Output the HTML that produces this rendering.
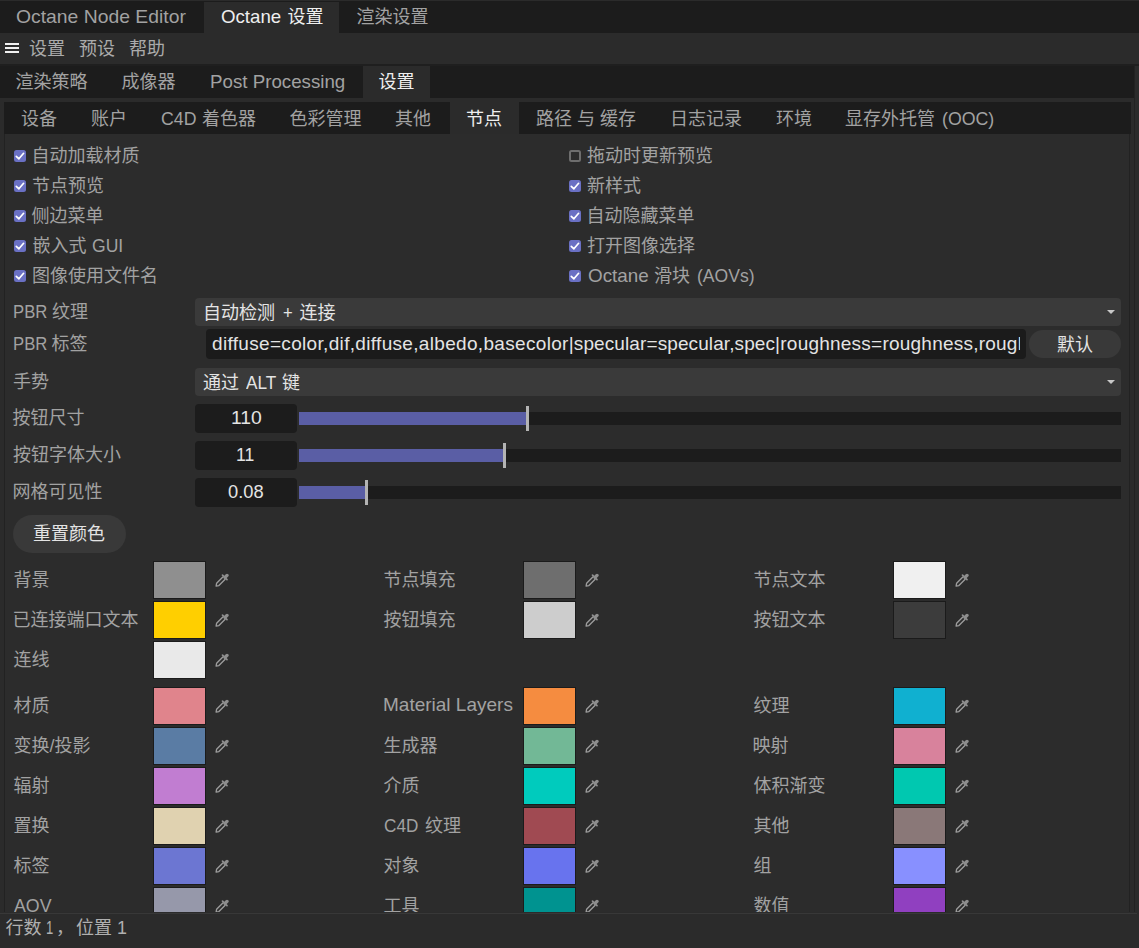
<!DOCTYPE html>
<html lang="zh-CN">
<head>
<meta charset="utf-8">
<title>Octane 设置</title>
<style>
*{box-sizing:border-box;margin:0;padding:0}
html,body{width:1139px;height:948px;overflow:hidden;background:#2b2b2b}
body{position:relative;font-family:"Liberation Sans","Noto Sans CJK SC",sans-serif;font-size:18px;color:#a2a2a2;line-height:24px}
.abs{position:absolute}
.t{position:absolute;white-space:nowrap;height:24px;line-height:24px;transform-origin:0 50%}
.lat{font-size:19px}
.on{color:#efefef}
.mn{color:#ababab}
.val{color:#e4e4e4}
.st{color:#b0b0b0;z-index:6}
#bar1{left:0;top:0;width:1139px;height:33px;background:#1c1c1c}
#bar1top{left:0;top:0;width:1139px;height:1px;background:#2b2b2b}
#tab1act{left:204px;top:2px;width:135px;height:31px;background:#2b2b2b}
#bar2{left:0;top:66px;width:1135px;height:32px;background:#1c1c1c}
#tab2act{left:363px;top:66px;width:67px;height:32px;background:#2b2b2b}
#bar3{left:4px;top:102px;width:1127px;height:32px;background:#1c1c1c}
#tab3act{left:450px;top:102px;width:69px;height:32px;background:#2b2b2b}
#panel{left:4px;top:134px;width:1126px;height:778px;background:#2c2c2c;border-left:1px solid #222;border-right:1px solid #222}
.ham{left:5px;width:14px;height:2px;background:#f0f0f0}
.cb{position:absolute;width:12px;height:12px;border-radius:2.5px;background:#6a70c4}
.cb svg{position:absolute;left:0;top:0}
.cb.off{background:transparent;border:2px solid #6e6e6e}
.dd{position:absolute;left:195px;width:926px;height:28px;background:#3a3a3a;border-radius:4px}
.dd:after{content:"";position:absolute;right:6px;top:12px;border-left:4px solid transparent;border-right:4px solid transparent;border-top:4.5px solid #c8c8c8}
.num{position:absolute;left:195px;width:102px;height:29px;background:#1c1c1c;border-radius:4px}
.trk{position:absolute;left:299px;width:822px;height:13px;background:#1c1c1c}
.fill{position:absolute;left:299px;height:13px;background:#5a5ea5}
.knob{position:absolute;width:3px;height:25px;background:#b4b4b4}
.pill{position:absolute;background:#393939;border-radius:20px}
.sw{position:absolute;width:53px;height:38px;border:1px solid #1b1b1b}
.ey{position:absolute;width:14px;height:14px}
#clip{left:0;top:134px;width:1139px;height:778px;overflow:hidden}
#status{z-index:5;left:0;top:912px;width:1139px;height:36px;background:#2b2b2b}
#stline{z-index:6;left:0;top:913px;width:1137px;height:1px;background:#383838}
.vl{position:absolute;width:1px;background:#222}
#hl{left:0;top:64px;width:1139px;height:2px;background:#1f1f1f}
#inp{left:206px;top:329px;width:820px;height:30px;background:#1b1b1b;border-radius:4px;overflow:hidden}
</style>
</head>
<body>
<div class="abs" id="bar1"></div>
<div class="abs" id="bar1top"></div>
<div class="abs" id="tab1act"></div>
<div class="abs ham" style="top:43px"></div>
<div class="abs ham" style="top:47px"></div>
<div class="abs ham" style="top:51px"></div>
<div class="abs" id="hl"></div>
<div class="abs" id="bar2"></div>
<div class="vl" style="left:1134px;top:66px;height:846px"></div>
<div class="abs" id="tab2act"></div>
<div class="abs" id="bar3"></div>
<div class="abs" id="tab3act"></div>
<div class="abs" id="panel"></div>
<div class="cb" style="left:14px;top:150px"><svg width="12" height="12" viewBox="0 0 12 12"><path d="M2.3 6.3 L4.9 8.8 L9.6 3.3" fill="none" stroke="#fff" stroke-width="1.7" stroke-linecap="round" stroke-linejoin="round"/></svg></div>
<div class="cb off" style="left:569px;top:150px"></div>
<div class="cb" style="left:14px;top:180px"><svg width="12" height="12" viewBox="0 0 12 12"><path d="M2.3 6.3 L4.9 8.8 L9.6 3.3" fill="none" stroke="#fff" stroke-width="1.7" stroke-linecap="round" stroke-linejoin="round"/></svg></div>
<div class="cb" style="left:569px;top:180px"><svg width="12" height="12" viewBox="0 0 12 12"><path d="M2.3 6.3 L4.9 8.8 L9.6 3.3" fill="none" stroke="#fff" stroke-width="1.7" stroke-linecap="round" stroke-linejoin="round"/></svg></div>
<div class="cb" style="left:14px;top:210px"><svg width="12" height="12" viewBox="0 0 12 12"><path d="M2.3 6.3 L4.9 8.8 L9.6 3.3" fill="none" stroke="#fff" stroke-width="1.7" stroke-linecap="round" stroke-linejoin="round"/></svg></div>
<div class="cb" style="left:569px;top:210px"><svg width="12" height="12" viewBox="0 0 12 12"><path d="M2.3 6.3 L4.9 8.8 L9.6 3.3" fill="none" stroke="#fff" stroke-width="1.7" stroke-linecap="round" stroke-linejoin="round"/></svg></div>
<div class="cb" style="left:14px;top:240px"><svg width="12" height="12" viewBox="0 0 12 12"><path d="M2.3 6.3 L4.9 8.8 L9.6 3.3" fill="none" stroke="#fff" stroke-width="1.7" stroke-linecap="round" stroke-linejoin="round"/></svg></div>
<div class="cb" style="left:569px;top:240px"><svg width="12" height="12" viewBox="0 0 12 12"><path d="M2.3 6.3 L4.9 8.8 L9.6 3.3" fill="none" stroke="#fff" stroke-width="1.7" stroke-linecap="round" stroke-linejoin="round"/></svg></div>
<div class="cb" style="left:14px;top:270px"><svg width="12" height="12" viewBox="0 0 12 12"><path d="M2.3 6.3 L4.9 8.8 L9.6 3.3" fill="none" stroke="#fff" stroke-width="1.7" stroke-linecap="round" stroke-linejoin="round"/></svg></div>
<div class="cb" style="left:569px;top:270px"><svg width="12" height="12" viewBox="0 0 12 12"><path d="M2.3 6.3 L4.9 8.8 L9.6 3.3" fill="none" stroke="#fff" stroke-width="1.7" stroke-linecap="round" stroke-linejoin="round"/></svg></div>
<div class="dd" style="top:298px"></div>
<div class="abs" id="inp"><div class="abs" style="left:6px;top:0;width:808px;height:30px;overflow:hidden"><div class="t val lat" id="tags" style="left:0;top:3px"><span style="letter-spacing:.325px">diffuse=color,dif,diffuse,albedo,basecolor</span><span style="letter-spacing:.10px">|specular=specular,spec</span><span style="letter-spacing:.23px">|roughness=roughness,rough</span></div></div></div>
<div class="pill" style="left:1029px;top:330px;width:92px;height:28px"></div>
<div class="dd" style="top:368px"></div>
<div class="num" style="top:404px"></div><div class="trk" style="top:412px"></div><div class="fill" style="top:412px;width:228px"></div><div class="knob" style="left:526px;top:406px"></div>
<div class="num" style="top:441px"></div><div class="trk" style="top:449px"></div><div class="fill" style="top:449px;width:205px"></div><div class="knob" style="left:503px;top:443px"></div>
<div class="num" style="top:478px"></div><div class="trk" style="top:486px"></div><div class="fill" style="top:486px;width:67px"></div><div class="knob" style="left:365px;top:480px"></div>
<div class="pill" style="left:13px;top:515px;width:113px;height:38px"></div>
<div class="sw" style="left:153px;top:561px;background:#8f8f8f"></div><svg class="ey" style="left:215px;top:572.5px" width="14" height="14" viewBox="0 0 14 14"><path d="M8.1 3.8 L1.6 10.3 L1.1 13.1 L3.9 12.6 L10.4 6.1" fill="none" stroke="#9c9c9c" stroke-width="1.35" stroke-linejoin="round"/><path d="M7.5 2.2 L12 6.7" stroke="#8e8e8e" stroke-width="1.7" stroke-linecap="round"/><path d="M10 4.4 L12 2.4" stroke="#8e8e8e" stroke-width="3.3" stroke-linecap="round"/></svg>
<div class="sw" style="left:153px;top:601px;background:#ffcf00"></div><svg class="ey" style="left:215px;top:612.5px" width="14" height="14" viewBox="0 0 14 14"><path d="M8.1 3.8 L1.6 10.3 L1.1 13.1 L3.9 12.6 L10.4 6.1" fill="none" stroke="#9c9c9c" stroke-width="1.35" stroke-linejoin="round"/><path d="M7.5 2.2 L12 6.7" stroke="#8e8e8e" stroke-width="1.7" stroke-linecap="round"/><path d="M10 4.4 L12 2.4" stroke="#8e8e8e" stroke-width="3.3" stroke-linecap="round"/></svg>
<div class="sw" style="left:153px;top:641px;background:#e9e9e9"></div><svg class="ey" style="left:215px;top:652.5px" width="14" height="14" viewBox="0 0 14 14"><path d="M8.1 3.8 L1.6 10.3 L1.1 13.1 L3.9 12.6 L10.4 6.1" fill="none" stroke="#9c9c9c" stroke-width="1.35" stroke-linejoin="round"/><path d="M7.5 2.2 L12 6.7" stroke="#8e8e8e" stroke-width="1.7" stroke-linecap="round"/><path d="M10 4.4 L12 2.4" stroke="#8e8e8e" stroke-width="3.3" stroke-linecap="round"/></svg>
<div class="sw" style="left:153px;top:687px;background:#e0848c"></div><svg class="ey" style="left:215px;top:698.5px" width="14" height="14" viewBox="0 0 14 14"><path d="M8.1 3.8 L1.6 10.3 L1.1 13.1 L3.9 12.6 L10.4 6.1" fill="none" stroke="#9c9c9c" stroke-width="1.35" stroke-linejoin="round"/><path d="M7.5 2.2 L12 6.7" stroke="#8e8e8e" stroke-width="1.7" stroke-linecap="round"/><path d="M10 4.4 L12 2.4" stroke="#8e8e8e" stroke-width="3.3" stroke-linecap="round"/></svg>
<div class="sw" style="left:153px;top:727px;background:#5a7ca4"></div><svg class="ey" style="left:215px;top:738.5px" width="14" height="14" viewBox="0 0 14 14"><path d="M8.1 3.8 L1.6 10.3 L1.1 13.1 L3.9 12.6 L10.4 6.1" fill="none" stroke="#9c9c9c" stroke-width="1.35" stroke-linejoin="round"/><path d="M7.5 2.2 L12 6.7" stroke="#8e8e8e" stroke-width="1.7" stroke-linecap="round"/><path d="M10 4.4 L12 2.4" stroke="#8e8e8e" stroke-width="3.3" stroke-linecap="round"/></svg>
<div class="sw" style="left:153px;top:767px;background:#c17dd1"></div><svg class="ey" style="left:215px;top:778.5px" width="14" height="14" viewBox="0 0 14 14"><path d="M8.1 3.8 L1.6 10.3 L1.1 13.1 L3.9 12.6 L10.4 6.1" fill="none" stroke="#9c9c9c" stroke-width="1.35" stroke-linejoin="round"/><path d="M7.5 2.2 L12 6.7" stroke="#8e8e8e" stroke-width="1.7" stroke-linecap="round"/><path d="M10 4.4 L12 2.4" stroke="#8e8e8e" stroke-width="3.3" stroke-linecap="round"/></svg>
<div class="sw" style="left:153px;top:807px;background:#e0d2b0"></div><svg class="ey" style="left:215px;top:818.5px" width="14" height="14" viewBox="0 0 14 14"><path d="M8.1 3.8 L1.6 10.3 L1.1 13.1 L3.9 12.6 L10.4 6.1" fill="none" stroke="#9c9c9c" stroke-width="1.35" stroke-linejoin="round"/><path d="M7.5 2.2 L12 6.7" stroke="#8e8e8e" stroke-width="1.7" stroke-linecap="round"/><path d="M10 4.4 L12 2.4" stroke="#8e8e8e" stroke-width="3.3" stroke-linecap="round"/></svg>
<div class="sw" style="left:153px;top:847px;background:#6c76d2"></div><svg class="ey" style="left:215px;top:858.5px" width="14" height="14" viewBox="0 0 14 14"><path d="M8.1 3.8 L1.6 10.3 L1.1 13.1 L3.9 12.6 L10.4 6.1" fill="none" stroke="#9c9c9c" stroke-width="1.35" stroke-linejoin="round"/><path d="M7.5 2.2 L12 6.7" stroke="#8e8e8e" stroke-width="1.7" stroke-linecap="round"/><path d="M10 4.4 L12 2.4" stroke="#8e8e8e" stroke-width="3.3" stroke-linecap="round"/></svg>
<div class="sw" style="left:153px;top:887px;background:#9698aa"></div><svg class="ey" style="left:215px;top:898.5px" width="14" height="14" viewBox="0 0 14 14"><path d="M8.1 3.8 L1.6 10.3 L1.1 13.1 L3.9 12.6 L10.4 6.1" fill="none" stroke="#9c9c9c" stroke-width="1.35" stroke-linejoin="round"/><path d="M7.5 2.2 L12 6.7" stroke="#8e8e8e" stroke-width="1.7" stroke-linecap="round"/><path d="M10 4.4 L12 2.4" stroke="#8e8e8e" stroke-width="3.3" stroke-linecap="round"/></svg>
<div class="sw" style="left:523px;top:561px;background:#6e6e6e"></div><svg class="ey" style="left:585px;top:572.5px" width="14" height="14" viewBox="0 0 14 14"><path d="M8.1 3.8 L1.6 10.3 L1.1 13.1 L3.9 12.6 L10.4 6.1" fill="none" stroke="#9c9c9c" stroke-width="1.35" stroke-linejoin="round"/><path d="M7.5 2.2 L12 6.7" stroke="#8e8e8e" stroke-width="1.7" stroke-linecap="round"/><path d="M10 4.4 L12 2.4" stroke="#8e8e8e" stroke-width="3.3" stroke-linecap="round"/></svg>
<div class="sw" style="left:523px;top:601px;background:#cdcdcd"></div><svg class="ey" style="left:585px;top:612.5px" width="14" height="14" viewBox="0 0 14 14"><path d="M8.1 3.8 L1.6 10.3 L1.1 13.1 L3.9 12.6 L10.4 6.1" fill="none" stroke="#9c9c9c" stroke-width="1.35" stroke-linejoin="round"/><path d="M7.5 2.2 L12 6.7" stroke="#8e8e8e" stroke-width="1.7" stroke-linecap="round"/><path d="M10 4.4 L12 2.4" stroke="#8e8e8e" stroke-width="3.3" stroke-linecap="round"/></svg>
<div class="sw" style="left:523px;top:687px;background:#f58c40"></div><svg class="ey" style="left:585px;top:698.5px" width="14" height="14" viewBox="0 0 14 14"><path d="M8.1 3.8 L1.6 10.3 L1.1 13.1 L3.9 12.6 L10.4 6.1" fill="none" stroke="#9c9c9c" stroke-width="1.35" stroke-linejoin="round"/><path d="M7.5 2.2 L12 6.7" stroke="#8e8e8e" stroke-width="1.7" stroke-linecap="round"/><path d="M10 4.4 L12 2.4" stroke="#8e8e8e" stroke-width="3.3" stroke-linecap="round"/></svg>
<div class="sw" style="left:523px;top:727px;background:#72b896"></div><svg class="ey" style="left:585px;top:738.5px" width="14" height="14" viewBox="0 0 14 14"><path d="M8.1 3.8 L1.6 10.3 L1.1 13.1 L3.9 12.6 L10.4 6.1" fill="none" stroke="#9c9c9c" stroke-width="1.35" stroke-linejoin="round"/><path d="M7.5 2.2 L12 6.7" stroke="#8e8e8e" stroke-width="1.7" stroke-linecap="round"/><path d="M10 4.4 L12 2.4" stroke="#8e8e8e" stroke-width="3.3" stroke-linecap="round"/></svg>
<div class="sw" style="left:523px;top:767px;background:#00cbbd"></div><svg class="ey" style="left:585px;top:778.5px" width="14" height="14" viewBox="0 0 14 14"><path d="M8.1 3.8 L1.6 10.3 L1.1 13.1 L3.9 12.6 L10.4 6.1" fill="none" stroke="#9c9c9c" stroke-width="1.35" stroke-linejoin="round"/><path d="M7.5 2.2 L12 6.7" stroke="#8e8e8e" stroke-width="1.7" stroke-linecap="round"/><path d="M10 4.4 L12 2.4" stroke="#8e8e8e" stroke-width="3.3" stroke-linecap="round"/></svg>
<div class="sw" style="left:523px;top:807px;background:#a04a52"></div><svg class="ey" style="left:585px;top:818.5px" width="14" height="14" viewBox="0 0 14 14"><path d="M8.1 3.8 L1.6 10.3 L1.1 13.1 L3.9 12.6 L10.4 6.1" fill="none" stroke="#9c9c9c" stroke-width="1.35" stroke-linejoin="round"/><path d="M7.5 2.2 L12 6.7" stroke="#8e8e8e" stroke-width="1.7" stroke-linecap="round"/><path d="M10 4.4 L12 2.4" stroke="#8e8e8e" stroke-width="3.3" stroke-linecap="round"/></svg>
<div class="sw" style="left:523px;top:847px;background:#6873ee"></div><svg class="ey" style="left:585px;top:858.5px" width="14" height="14" viewBox="0 0 14 14"><path d="M8.1 3.8 L1.6 10.3 L1.1 13.1 L3.9 12.6 L10.4 6.1" fill="none" stroke="#9c9c9c" stroke-width="1.35" stroke-linejoin="round"/><path d="M7.5 2.2 L12 6.7" stroke="#8e8e8e" stroke-width="1.7" stroke-linecap="round"/><path d="M10 4.4 L12 2.4" stroke="#8e8e8e" stroke-width="3.3" stroke-linecap="round"/></svg>
<div class="sw" style="left:523px;top:887px;background:#009390"></div><svg class="ey" style="left:585px;top:898.5px" width="14" height="14" viewBox="0 0 14 14"><path d="M8.1 3.8 L1.6 10.3 L1.1 13.1 L3.9 12.6 L10.4 6.1" fill="none" stroke="#9c9c9c" stroke-width="1.35" stroke-linejoin="round"/><path d="M7.5 2.2 L12 6.7" stroke="#8e8e8e" stroke-width="1.7" stroke-linecap="round"/><path d="M10 4.4 L12 2.4" stroke="#8e8e8e" stroke-width="3.3" stroke-linecap="round"/></svg>
<div class="sw" style="left:893px;top:561px;background:#f0f0f0"></div><svg class="ey" style="left:955px;top:572.5px" width="14" height="14" viewBox="0 0 14 14"><path d="M8.1 3.8 L1.6 10.3 L1.1 13.1 L3.9 12.6 L10.4 6.1" fill="none" stroke="#9c9c9c" stroke-width="1.35" stroke-linejoin="round"/><path d="M7.5 2.2 L12 6.7" stroke="#8e8e8e" stroke-width="1.7" stroke-linecap="round"/><path d="M10 4.4 L12 2.4" stroke="#8e8e8e" stroke-width="3.3" stroke-linecap="round"/></svg>
<div class="sw" style="left:893px;top:601px;background:#3c3c3c"></div><svg class="ey" style="left:955px;top:612.5px" width="14" height="14" viewBox="0 0 14 14"><path d="M8.1 3.8 L1.6 10.3 L1.1 13.1 L3.9 12.6 L10.4 6.1" fill="none" stroke="#9c9c9c" stroke-width="1.35" stroke-linejoin="round"/><path d="M7.5 2.2 L12 6.7" stroke="#8e8e8e" stroke-width="1.7" stroke-linecap="round"/><path d="M10 4.4 L12 2.4" stroke="#8e8e8e" stroke-width="3.3" stroke-linecap="round"/></svg>
<div class="sw" style="left:893px;top:687px;background:#10b0d0"></div><svg class="ey" style="left:955px;top:698.5px" width="14" height="14" viewBox="0 0 14 14"><path d="M8.1 3.8 L1.6 10.3 L1.1 13.1 L3.9 12.6 L10.4 6.1" fill="none" stroke="#9c9c9c" stroke-width="1.35" stroke-linejoin="round"/><path d="M7.5 2.2 L12 6.7" stroke="#8e8e8e" stroke-width="1.7" stroke-linecap="round"/><path d="M10 4.4 L12 2.4" stroke="#8e8e8e" stroke-width="3.3" stroke-linecap="round"/></svg>
<div class="sw" style="left:893px;top:727px;background:#d8829c"></div><svg class="ey" style="left:955px;top:738.5px" width="14" height="14" viewBox="0 0 14 14"><path d="M8.1 3.8 L1.6 10.3 L1.1 13.1 L3.9 12.6 L10.4 6.1" fill="none" stroke="#9c9c9c" stroke-width="1.35" stroke-linejoin="round"/><path d="M7.5 2.2 L12 6.7" stroke="#8e8e8e" stroke-width="1.7" stroke-linecap="round"/><path d="M10 4.4 L12 2.4" stroke="#8e8e8e" stroke-width="3.3" stroke-linecap="round"/></svg>
<div class="sw" style="left:893px;top:767px;background:#00c8b0"></div><svg class="ey" style="left:955px;top:778.5px" width="14" height="14" viewBox="0 0 14 14"><path d="M8.1 3.8 L1.6 10.3 L1.1 13.1 L3.9 12.6 L10.4 6.1" fill="none" stroke="#9c9c9c" stroke-width="1.35" stroke-linejoin="round"/><path d="M7.5 2.2 L12 6.7" stroke="#8e8e8e" stroke-width="1.7" stroke-linecap="round"/><path d="M10 4.4 L12 2.4" stroke="#8e8e8e" stroke-width="3.3" stroke-linecap="round"/></svg>
<div class="sw" style="left:893px;top:807px;background:#8a7878"></div><svg class="ey" style="left:955px;top:818.5px" width="14" height="14" viewBox="0 0 14 14"><path d="M8.1 3.8 L1.6 10.3 L1.1 13.1 L3.9 12.6 L10.4 6.1" fill="none" stroke="#9c9c9c" stroke-width="1.35" stroke-linejoin="round"/><path d="M7.5 2.2 L12 6.7" stroke="#8e8e8e" stroke-width="1.7" stroke-linecap="round"/><path d="M10 4.4 L12 2.4" stroke="#8e8e8e" stroke-width="3.3" stroke-linecap="round"/></svg>
<div class="sw" style="left:893px;top:847px;background:#8890ff"></div><svg class="ey" style="left:955px;top:858.5px" width="14" height="14" viewBox="0 0 14 14"><path d="M8.1 3.8 L1.6 10.3 L1.1 13.1 L3.9 12.6 L10.4 6.1" fill="none" stroke="#9c9c9c" stroke-width="1.35" stroke-linejoin="round"/><path d="M7.5 2.2 L12 6.7" stroke="#8e8e8e" stroke-width="1.7" stroke-linecap="round"/><path d="M10 4.4 L12 2.4" stroke="#8e8e8e" stroke-width="3.3" stroke-linecap="round"/></svg>
<div class="sw" style="left:893px;top:887px;background:#9040c0"></div><svg class="ey" style="left:955px;top:898.5px" width="14" height="14" viewBox="0 0 14 14"><path d="M8.1 3.8 L1.6 10.3 L1.1 13.1 L3.9 12.6 L10.4 6.1" fill="none" stroke="#9c9c9c" stroke-width="1.35" stroke-linejoin="round"/><path d="M7.5 2.2 L12 6.7" stroke="#8e8e8e" stroke-width="1.7" stroke-linecap="round"/><path d="M10 4.4 L12 2.4" stroke="#8e8e8e" stroke-width="3.3" stroke-linecap="round"/></svg>
<div class="abs" id="status"></div>
<div class="abs" id="stline"></div>
<div class="t lat" id="p0" style="left:15.60px;top:5px;transform:scaleX(1.0180)">Octane Node Editor</div>
<div class="t lat on" id="p1" style="left:220.50px;top:5px;transform:scaleX(0.9820)">Octane</div>
<div class="t on" id="p2" style="left:287.50px;top:5px">设置</div>
<div class="t" id="p3" style="left:356.50px;top:5px">渲染设置</div>
<div class="t mn" id="p4" style="left:29.00px;top:37px">设置</div>
<div class="t mn" id="p5" style="left:79.00px;top:37px">预设</div>
<div class="t mn" id="p6" style="left:129.00px;top:37px">帮助</div>
<div class="t" id="p7" style="left:15.50px;top:70px">渲染策略</div>
<div class="t" id="p8" style="left:121.50px;top:70px">成像器</div>
<div class="t lat" id="p9" style="left:209.51px;top:70px;transform:scaleX(0.9853)">Post Processing</div>
<div class="t on" id="p10" style="left:378.50px;top:70px">设置</div>
<div class="t" id="p11" style="left:21.00px;top:107px">设备</div>
<div class="t" id="p12" style="left:91.00px;top:107px">账户</div>
<div class="t lat" id="p13" style="left:161.00px;top:107px;transform:scaleX(0.9316)">C4D</div>
<div class="t" id="p14" style="left:202.00px;top:107px">着色器</div>
<div class="t" id="p15" style="left:289.50px;top:107px">色彩管理</div>
<div class="t" id="p16" style="left:395.00px;top:107px">其他</div>
<div class="t on" id="p17" style="left:466.00px;top:107px">节点</div>
<div class="t" id="p18" style="left:536.00px;top:107px">路径 与 缓存</div>
<div class="t" id="p19" style="left:670.00px;top:107px">日志记录</div>
<div class="t" id="p20" style="left:776.00px;top:107px">环境</div>
<div class="t" id="p21" style="left:845.00px;top:107px">显存外托管</div>
<div class="t lat" id="p22" style="left:942.00px;top:107px;transform:scaleX(0.9345)">(OOC)</div>
<div class="t" id="p23" style="left:31.50px;top:144px">自动加载材质</div>
<div class="t" id="p24" style="left:32.00px;top:174px">节点预览</div>
<div class="t" id="p25" style="left:31.50px;top:204px">侧边菜单</div>
<div class="t" id="p26" style="left:32.50px;top:234px">嵌入式</div>
<div class="t lat" id="p27" style="left:92.00px;top:234px;transform:scaleX(0.9242)">GUI</div>
<div class="t" id="p28" style="left:32.00px;top:264px">图像使用文件名</div>
<div class="t" id="p29" style="left:587.00px;top:144px">拖动时更新预览</div>
<div class="t" id="p30" style="left:587.00px;top:174px">新样式</div>
<div class="t" id="p31" style="left:586.50px;top:204px">自动隐藏菜单</div>
<div class="t" id="p32" style="left:587.00px;top:234px">打开图像选择</div>
<div class="t lat" id="p33" style="left:587.50px;top:264px;transform:scaleX(0.9918)">Octane</div>
<div class="t" id="p34" style="left:654.00px;top:264px">滑块</div>
<div class="t lat" id="p35" style="left:697.00px;top:264px;transform:scaleX(0.9234)">(AOVs)</div>
<div class="t lat" id="p36" style="left:13.42px;top:300px;transform:scaleX(0.8789)">PBR</div>
<div class="t" id="p37" style="left:52.00px;top:300px">纹理</div>
<div class="t lat" id="p38" style="left:13.42px;top:332px;transform:scaleX(0.8789)">PBR</div>
<div class="t" id="p39" style="left:51.50px;top:332px">标签</div>
<div class="t val" id="p40" style="left:203.00px;top:301px">自动检测</div>
<div class="t lat val" id="p41" style="left:282.60px;top:301px;transform:scaleX(0.8727)">+</div>
<div class="t val" id="p42" style="left:299.50px;top:301px">连接</div>
<div class="t val" id="p43" style="left:1057.00px;top:333px">默认</div>
<div class="t" id="p44" style="left:13.00px;top:370px">手势</div>
<div class="t val" id="p45" style="left:203.00px;top:371px">通过</div>
<div class="t lat val" id="p46" style="left:245.70px;top:371px;transform:scaleX(0.9029)">ALT</div>
<div class="t val" id="p47" style="left:282.00px;top:371px">键</div>
<div class="t" id="p48" style="left:12.50px;top:406px">按钮尺寸</div>
<div class="t" id="p49" style="left:13.00px;top:443px">按钮字体大小</div>
<div class="t" id="p50" style="left:12.50px;top:480px">网格可见性</div>
<div class="t lat val" id="p51" style="left:230.78px;top:406px;transform:scaleX(1.0172)">110</div>
<div class="t lat val" id="p52" style="left:235.57px;top:443px;transform:scaleX(0.9263)">11</div>
<div class="t lat val" id="p53" style="left:227.80px;top:480px;transform:scaleX(0.9622)">0.08</div>
<div class="t val" id="p54" style="left:33.00px;top:522px">重置颜色</div>
<div class="t st" id="p55" style="left:5.50px;top:916px">行数</div>
<div class="t lat st" id="p56" style="left:45.81px;top:916px;transform:scaleX(0.6889)">1</div>
<div class="t st" id="p57" style="left:56.00px;top:916px">，</div>
<div class="t st" id="p58" style="left:76.00px;top:916px">位置</div>
<div class="t lat st" id="p59" style="left:116.56px;top:916px;transform:scaleX(0.9444)">1</div>
<div class="t" id="p60" style="left:13.50px;top:568px">背景</div>
<div class="t" id="p61" style="left:12.50px;top:608px">已连接端口文本</div>
<div class="t" id="p62" style="left:13.50px;top:648px">连线</div>
<div class="t" id="p63" style="left:13.50px;top:694px">材质</div>
<div class="t" id="p64" style="left:13.50px;top:734px">变换/投影</div>
<div class="t" id="p65" style="left:13.50px;top:774px">辐射</div>
<div class="t" id="p66" style="left:13.50px;top:814px">置换</div>
<div class="t" id="p67" style="left:13.50px;top:854px">标签</div>
<div class="t lat" id="p68" style="left:13.94px;top:894px;transform:scaleX(0.9357)">AOV</div>
<div class="t" id="p69" style="left:383.50px;top:568px">节点填充</div>
<div class="t" id="p70" style="left:383.50px;top:608px">按钮填充</div>
<div class="t lat" id="p71" style="left:383.00px;top:693px">Material Layers</div>
<div class="t" id="p72" style="left:383.50px;top:734px">生成器</div>
<div class="t" id="p73" style="left:383.50px;top:774px">介质</div>
<div class="t lat" id="p74" style="left:383.70px;top:814px;transform:scaleX(0.9026)">C4D</div>
<div class="t" id="p75" style="left:425.00px;top:814px">纹理</div>
<div class="t" id="p76" style="left:383.50px;top:854px">对象</div>
<div class="t" id="p77" style="left:383.50px;top:894px">工具</div>
<div class="t" id="p78" style="left:753.50px;top:568px">节点文本</div>
<div class="t" id="p79" style="left:753.50px;top:608px">按钮文本</div>
<div class="t" id="p80" style="left:753.50px;top:694px">纹理</div>
<div class="t" id="p81" style="left:752.50px;top:734px">映射</div>
<div class="t" id="p82" style="left:753.50px;top:774px">体积渐变</div>
<div class="t" id="p83" style="left:753.50px;top:814px">其他</div>
<div class="t" id="p84" style="left:753.50px;top:854px">组</div>
<div class="t" id="p85" style="left:753.50px;top:894px">数值</div>
</body>
</html>
